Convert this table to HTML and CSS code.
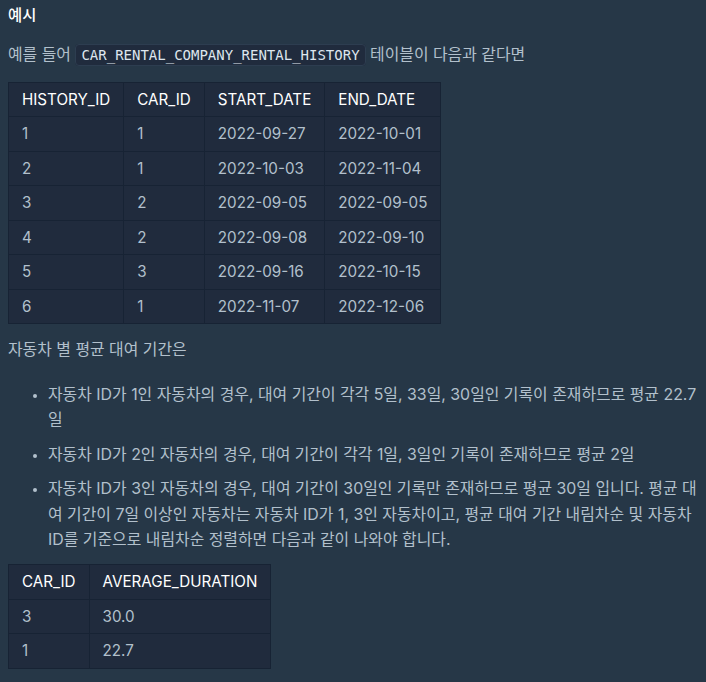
FILE: index.html
```html
<!DOCTYPE html>
<html lang="ko">
<head>
<meta charset="utf-8">
<link rel="stylesheet" href="styles.css">
</head>
<body>
<div class="desc">
  <h5 class="title">예시</h5>
  <p class="para">예를 들어 <code class="code">CAR_RENTAL_COMPANY_RENTAL_HISTORY</code> 테이블이 다음과 같다면</p>
  <table class="tbl">
    <thead>
      <tr><th>HISTORY_ID</th><th>CAR_ID</th><th>START_DATE</th><th>END_DATE</th></tr>
    </thead>
    <tbody>
      <tr><td>1</td><td>1</td><td>2022-09-27</td><td>2022-10-01</td></tr>
      <tr><td>2</td><td>1</td><td>2022-10-03</td><td>2022-11-04</td></tr>
      <tr><td>3</td><td>2</td><td>2022-09-05</td><td>2022-09-05</td></tr>
      <tr><td>4</td><td>2</td><td>2022-09-08</td><td>2022-09-10</td></tr>
      <tr><td>5</td><td>3</td><td>2022-09-16</td><td>2022-10-15</td></tr>
      <tr><td>6</td><td>1</td><td>2022-11-07</td><td>2022-12-06</td></tr>
    </tbody>
  </table>
  <p class="para">자동차 별 평균 대여 기간은</p>
  <ul class="list">
    <li>자동차 ID가 1인 자동차의 경우, 대여 기간이 각각 5일, 33일, 30일인 기록이 존재하므로 평균 22.7일</li>
    <li>자동차 ID가 2인 자동차의 경우, 대여 기간이 각각 1일, 3일인 기록이 존재하므로 평균 2일</li>
    <li>자동차 ID가 3인 자동차의 경우, 대여 기간이 30일인 기록만 존재하므로 평균 30일 입니다. 평균 대여 기간이 7일 이상인 자동차는 자동차 ID가 1, 3인 자동차이고, 평균 대여 기간 내림차순 및 자동차 ID를 기준으로 내림차순 정렬하면 다음과 같이 나와야 합니다.</li>
  </ul>
  <table class="tbl tbl-result">
    <thead>
      <tr><th>CAR_ID</th><th>AVERAGE_DURATION</th></tr>
    </thead>
    <tbody>
      <tr><td>3</td><td>30.0</td></tr>
      <tr><td>1</td><td>22.7</td></tr>
    </tbody>
  </table>
</div>
</body>
</html>
```
FILE: styles.css
```css
html, body {
  margin: 0;
  padding: 0;
  background: #263747;
}
body {
  font-family: Inter, "Noto Sans CJK KR", sans-serif;
  font-size: 15.9px;
  line-height: 25.5px;
  color: #b2c0cc;
}
.desc {
  padding: 3px 8px 8px 8px;
}
.title {
  margin: 0;
  font-size: 15.4px;
  font-weight: 500;
  line-height: 26px;
  color: #ffffff;
}
.para {
  margin: 13px 0 0 0;
}
.code {
  font-family: "DejaVu Sans Mono", "Liberation Mono", monospace;
  font-size: 14px;
  color: #dee6ee;
  background: #202b3d;
  border: 1px solid #2d3d50;
  border-radius: 4px;
  padding: 2px 5px;
}
.tbl {
  margin-top: 13px;
  border-collapse: collapse;
  background: #202b3d;
  border: 1px solid #172334;
  font-size: 15.2px;
}
.tbl-result {
  margin-top: 11.5px;
}
.tbl th, .tbl td {
  border: 1px solid #172334;
  padding: 7px 13px;
  line-height: 19.5px;
  text-align: left;
  white-space: nowrap;
}
.tbl th {
  font-weight: 400;
  color: #ffffff;
}
.list {
  margin: 19px 0 0 0;
  padding-left: 40px;
}
.list li {
  margin-bottom: 9px;
}
.list li::marker {
  font-size: 12px;
}
```
